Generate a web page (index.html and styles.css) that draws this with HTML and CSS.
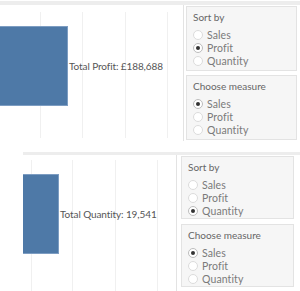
FILE: index.html
```html
<!DOCTYPE html>
<html>
<head>
<meta charset="utf-8">
<link rel="stylesheet" href="styles.css">
</head>
<body>
<section class="dash dash-top">
  <div class="chart chart-top">
    <div class="bar-row">
      <div class="bar bar-profit"></div>
      <span class="bar-label">Total Profit: £188,688</span>
    </div>
  </div>
  <div class="side">
    <div class="panel">
      <div class="panel-title">Sort by</div>
      <div class="radio"><span class="dot"></span>Sales</div>
      <div class="radio"><span class="dot on"></span>Profit</div>
      <div class="radio"><span class="dot"></span>Quantity</div>
    </div>
    <div class="panel">
      <div class="panel-title">Choose measure</div>
      <div class="radio"><span class="dot on"></span>Sales</div>
      <div class="radio"><span class="dot"></span>Profit</div>
      <div class="radio"><span class="dot"></span>Quantity</div>
    </div>
  </div>
</section>
<section class="dash dash-bottom">
  <div class="chart chart-bottom">
    <div class="bar-row">
      <div class="bar bar-qty"></div>
      <span class="bar-label">Total Quantity: 19,541</span>
    </div>
  </div>
  <div class="side side-bottom">
    <div class="panel">
      <div class="panel-title">Sort by</div>
      <div class="radio"><span class="dot"></span>Sales</div>
      <div class="radio"><span class="dot"></span>Profit</div>
      <div class="radio"><span class="dot on"></span>Quantity</div>
    </div>
    <div class="panel">
      <div class="panel-title">Choose measure</div>
      <div class="radio"><span class="dot on"></span>Sales</div>
      <div class="radio"><span class="dot"></span>Profit</div>
      <div class="radio"><span class="dot"></span>Quantity</div>
    </div>
  </div>
</section>
</body>
</html>
```
FILE: styles.css
```css
html, body {
  margin: 0;
  padding: 0;
  background: #ffffff;
  width: 300px;
  height: 291px;
  overflow: hidden;
  font-family: Lato, "Open Sans", sans-serif;
}

.dash {
  display: flex;
  box-sizing: border-box;
}

.dash-top {
  margin-top: 1px;
  height: 140px;
  border-top: 4px solid #ededed;
}

.dash-bottom {
  margin-top: 11px;
  margin-left: 23px;
  height: 139px;
  border-top: 3px solid #ededed;
}

.chart {
  box-sizing: border-box;
  border-right: 1px solid #e3e3e3;
  background-repeat: no-repeat;
}

.chart-top {
  width: 184px;
  padding-top: 21px;
  background-image:
    linear-gradient(#f0f0f0, #f0f0f0),
    linear-gradient(#f0f0f0, #f0f0f0),
    linear-gradient(#f0f0f0, #f0f0f0),
    linear-gradient(#f0f0f0, #f0f0f0);
  background-size: 1px 126px;
  background-position: 40px 7px, 82px 7px, 125px 7px, 167px 7px;
}

.chart-bottom {
  width: 154px;
  padding-top: 19px;
  background-image:
    linear-gradient(#f0f0f0, #f0f0f0),
    linear-gradient(#f0f0f0, #f0f0f0),
    linear-gradient(#f0f0f0, #f0f0f0),
    linear-gradient(#f0f0f0, #f0f0f0);
  background-size: 1px 140px;
  background-position: 8px 5px, 49px 5px, 92px 5px, 134px 5px;
}

.bar-row {
  display: flex;
  align-items: center;
}

.bar {
  box-sizing: border-box;
  height: 80px;
  background: #4e79a7;
  border: 1px solid #7d9dc2;
  border-left: none;
  flex: none;
}

.bar-profit { width: 68px; }
.bar-qty { width: 36px; }

.bar-label {
  margin-left: 1px;
  font-size: 10px;
  letter-spacing: -0.1px;
  color: #555555;
  white-space: nowrap;
}

.side {
  display: flex;
  flex-direction: column;
  gap: 4px;
  padding: 1px 3px 0 2px;
}

.side-bottom {
  padding: 1px 0 0 4px;
  gap: 5px;
}

.panel {
  box-sizing: border-box;
  width: 111px;
  height: 65px;
  background: #f6f6f6;
  border: 1px solid #e3e3e3;
  padding: 4px 6px 0 6px;
}

.side-bottom .panel {
  width: 113px;
  height: 63px;
}

.panel-title {
  font-size: 10px;
  line-height: 12px;
  color: #666666;
  margin-bottom: 5px;
}

.radio {
  display: flex;
  align-items: center;
  height: 13px;
  font-size: 10.5px;
  letter-spacing: 0.1px;
  color: #7a7a7a;
  white-space: nowrap;
}

.dot {
  box-sizing: border-box;
  width: 10px;
  height: 10px;
  border-radius: 50%;
  border: 1px solid #dcdcdc;
  background: #ffffff;
  margin-right: 4px;
  flex: none;
  display: flex;
  align-items: center;
  justify-content: center;
}

.dot.on {
  border-color: #bdbdbd;
}

.dot.on::after {
  content: "";
  width: 4px;
  height: 4px;
  border-radius: 50%;
  background: #333333;
}
```
